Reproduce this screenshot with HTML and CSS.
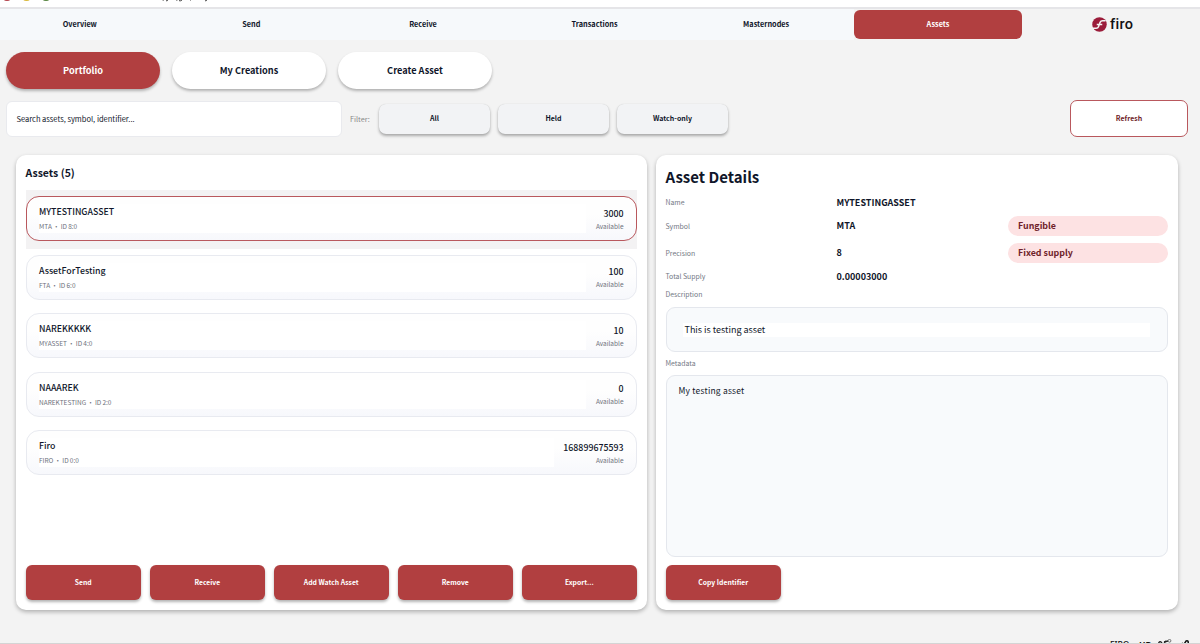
FILE: index.html
```html
<!DOCTYPE html>
<html lang="en">
<head>
<meta charset="utf-8">
<title>Firo</title>
<link rel="stylesheet" href="styles.css">
</head>
<body>
<div class="window">
  <header class="titlebar">
    <svg class="lights" width="220" height="3" viewBox="0 0 220 3">
      <ellipse cx="7" cy="-1.100" rx="3.500" ry="2" fill="#b3424b"/>
      <ellipse cx="26.500" cy="-1.100" rx="3.500" ry="2" fill="#d9b93a"/>
      <ellipse cx="46" cy="-1.100" rx="3.500" ry="2" fill="#56843f"/>
      <path d="M162.500 0h1.500M168 0q-.5 1-2 .8M176 0h1.500M182 0q-1 1.200-3 .7M190 0h1M207 0q-.6 1-2 .8" stroke="#444" fill="none"/>
    </svg>
  </header>
  <nav class="nav">
    <div class="tabs">
      <a class="tab">Overview</a>
      <a class="tab">Send</a>
      <a class="tab">Receive</a>
      <a class="tab">Transactions</a>
      <a class="tab">Masternodes</a>
    </div>
    <a class="tab tab-active">Assets</a>
    <div class="brand">
      <svg width="15" height="15" viewBox="0 0 30 30">
        <circle cx="15" cy="15" r="14.500" fill="#9b1c3a"/>
        <path d="M27 7.500h-6q-3.500 0-4.800 3.200l-3.200 8.600q-1.200 3.200-4.700 3.200H2M9.500 15h11" stroke="#f3f3f3" stroke-width="3" fill="none"/>
      </svg>
      <span>firo</span>
    </div>
  </nav>
  <div class="subtabs">
    <button class="pill pill-active">Portfolio</button>
    <button class="pill">My Creations</button>
    <button class="pill">Create Asset</button>
  </div>
  <div class="toolbar">
    <div class="search">Search assets, symbol, identifier...</div>
    <span class="filter-label">Filter:</span>
    <button class="chip">All</button>
    <button class="chip">Held</button>
    <button class="chip">Watch-only</button>
    <button class="refresh">Refresh</button>
  </div>
  <main class="panels">
    <section class="panel assets">
      <h2>Assets (5)</h2>
      <div class="list">
        <div class="row selected"><div class="card"><div class="info"><b>MYTESTINGASSET</b><small>MTA • ID 8:0</small></div><div class="amount"><b>3000</b><small>Available</small></div></div></div>
        <div class="row"><div class="card"><div class="info"><b>AssetForTesting</b><small>FTA • ID 6:0</small></div><div class="amount"><b>100</b><small>Available</small></div></div></div>
        <div class="row"><div class="card"><div class="info"><b>NAREKKKKK</b><small>MYASSET • ID 4:0</small></div><div class="amount"><b>10</b><small>Available</small></div></div></div>
        <div class="row"><div class="card"><div class="info"><b>NAAAREK</b><small>NAREKTESTING • ID 2:0</small></div><div class="amount"><b>0</b><small>Available</small></div></div></div>
        <div class="row"><div class="card"><div class="info"><b>Firo</b><small>FIRO • ID 0:0</small></div><div class="amount"><b>168899675593</b><small>Available</small></div></div></div>
      </div>
      <div class="actions">
        <button class="action">Send</button>
        <button class="action">Receive</button>
        <button class="action">Add Watch Asset</button>
        <button class="action">Remove</button>
        <button class="action">Export...</button>
      </div>
    </section>
    <section class="panel details">
      <h1>Asset Details</h1>
      <div class="facts">
        <span>Name</span><b>MYTESTINGASSET</b><i></i>
        <span>Symbol</span><b>MTA</b><em>Fungible</em>
        <span>Precision</span><b>8</b><em>Fixed supply</em>
        <span>Total Supply</span><b>0.00003000</b><i></i>
      </div>
      <div class="label">Description</div>
      <div class="description"><div>This is testing asset</div></div>
      <div class="label label-meta">Metadata</div>
      <div class="metadata">My testing asset</div>
      <button class="action">Copy Identifier</button>
    </section>
  </main>
  <footer class="status">
    <span class="unit">FIRO</span>
    <span class="hd">HD</span>
    <svg width="34" height="8" viewBox="0 0 34 8">
      <path d="M0 5q2-4 4-1M4 7l4-5M6 3l4-1M8 5h3" stroke="#222" stroke-width="1.300" fill="none"/>
      <circle cx="11.500" cy="1.800" r="1.400" stroke="#555" stroke-width=".8" fill="none"/>
      <circle cx="1.500" cy="5" r="1.400" stroke="#555" stroke-width=".8" fill="none"/>
      <path d="M22 6l3-2M25 7l3-5q3-1 2 3v3" stroke="#111" stroke-width="1.500" fill="none"/>
    </svg>
  </footer>
</div>
</body>
</html>
```
FILE: styles.css
```css
* { box-sizing: border-box; }
body {
  margin: 0;
  background: #f3f3f3;
  color: #10162a;
  font-family: "Noto Sans CJK SC", "Noto Sans", sans-serif;
}
button {
  font: inherit;
  color: inherit;
  border: 0;
  padding: 0 0 2px;
  font-weight: 700;
}
.window {
  width: 1200px;
  height: 644px;
  overflow: hidden;
  display: flex;
  flex-direction: column;
}
.titlebar {
  height: 9px;
  flex: none;
  background: #fff;
  border-bottom: 2px solid #e5e5e8;
}
.lights { display: block; }
.nav {
  height: 31px;
  flex: none;
  display: flex;
  align-items: flex-start;
}
.tabs {
  width: 854px;
  height: 31px;
  display: flex;
  background: #f6f9fb;
}
.tab {
  width: 171.6px;
  height: 30px;
  flex: none;
  padding: 0 12px 0 0;
  display: flex;
  align-items: center;
  justify-content: center;
  font-size: 7.3px;
  font-weight: 700;
}
.tab-active {
  width: 168px;
  height: 29px;
  margin-top: .5px;
  padding: 0 0 1px;
  border-radius: 6px;
  background: #b13f40;
  color: #fff;
}
.brand {
  margin: 7px 0 0 70px;
  display: flex;
  align-items: center;
  gap: 3px;
  height: 16px;
  font: 500 14.5px/16px Roboto, sans-serif;
  letter-spacing: .3px;
  color: #111;
}
.brand span { padding-top: 1px; }
.subtabs {
  display: flex;
  gap: 12px;
  padding: 12px 6px 0;
  height: 61px;
  flex: none;
}
.pill {
  width: 154px;
  height: 37px;
  border-radius: 19px;
  background: #fff;
  font-size: 9.2px;
  box-shadow: 0 2px 3px rgba(0,0,0,.27);
}
.pill-active {
  background: #b13f40;
  color: #fff;
}
.toolbar {
  height: 36px;
  flex: none;
  display: flex;
  align-items: center;
  padding: 0 12px 0 6px;
}
.search {
  width: 336px;
  height: 36px;
  border: 1px solid #e9eaee;
  border-radius: 6px;
  background: #fff;
  padding-left: 9.5px;
  line-height: 34px;
  font-size: 7.5px;
}
.filter-label {
  width: 37px;
  padding: 0 0 1px 8px;
  font-size: 7.3px;
  color: #888;
}
.chip {
  width: 111px;
  height: 30px;
  margin-right: 8px;
  border-radius: 7px;
  background: #f2f3f5;
  font-size: 7px;
  box-shadow: 0 2px 3px rgba(0,0,0,.3), 0 0 1px rgba(0,0,0,.15);
}
.refresh {
  width: 118px;
  height: 37px;
  margin: -1px 0 0 auto;
  border: 1px solid #b9585d;
  border-radius: 7px;
  background: #fff;
  color: #701f2b;
  font-size: 7px;
}
.panels {
  display: flex;
  gap: 9px;
  padding: 18px 0 0 15.5px;
  height: 473px;
  flex: none;
}
.panel {
  height: 455px;
  padding: 0 10px 10px;
  border-radius: 10px;
  background: #fff;
  box-shadow: 0 2px 4px rgba(0,0,0,.28);
  display: flex;
  flex-direction: column;
}
.assets { width: 631.5px; }
.details { width: 522px; padding-left: 9.5px; }
h1, h2 { margin: 0; font-weight: 700; flex: none; }
h2 {
  height: 35px;
  line-height: 36px;
  font-size: 10.5px;
}
.list { flex: 1; }
.row {
  height: 58.6px;
  padding: 6px 0 7.6px;
}
.selected { background: #f3f2f3; }
.card {
  height: 45px;
  display: flex;
  justify-content: space-between;
  padding: 0 12.5px;
  border: 1px solid #e8eaf0;
  border-radius: 13px;
  background: linear-gradient(#fefefe 40%, #f7f8fc);
}
.selected .card { border-color: #b9585d; }
.card b, .card small {
  display: block;
  white-space: nowrap;
}
.card b {
  font-size: 8.8px;
  font-weight: 500;
  line-height: 15px;
}
.card small {
  font-size: 6.5px;
  line-height: 14px;
  font-weight: 400;
  word-spacing: -.3px;
  color: #6d707b;
}
.info {
  flex: 1;
  height: 29px;
  margin-top: 7px;
  background: #fff;
}
.amount {
  min-width: 38px;
  margin-top: 8.5px;
  padding-left: 9px;
  text-align: right;
}
.card .amount small { line-height: 11px; }
.actions { display: flex; gap: 8.5px; }
.action {
  width: 115.5px;
  height: 35px;
  flex: none;
  border-radius: 6px;
  background: #b13f40;
  color: #fff;
  font-size: 6.8px;
  box-shadow: 0 2px 3px rgba(0,0,0,.3);
}
h1 {
  height: 37px;
  line-height: 43px;
  font-size: 15px;
}
.facts {
  display: grid;
  grid-template-columns: 171px 171px 160px;
  grid-template-rows: 20px 27px 27px 20px;
  align-items: center;
}
.facts span, .label { font-size: 6.9px; color: #737884; }
.facts b { font-size: 9px; }
.facts em {
  height: 20px;
  padding-left: 10.5px;
  border-radius: 10px;
  background: #fde2e3;
  color: #701f2b;
  font-style: normal;
  font-weight: 700;
  font-size: 8.9px;
  line-height: 20px;
}
.label { height: 21px; line-height: 16px; flex: none; }
.description {
  height: 45px;
  flex: none;
  border: 1px solid #e4e7ed;
  border-radius: 9px;
  background: #f8fafc;
  padding: 15px 17px 0 16px;
}
.description div {
  height: 14px;
  line-height: 13px;
  padding-left: 2px;
  background: #fff;
  font-size: 9px;
}
.label-meta { height: 23px; line-height: 23px; }
.metadata {
  height: 182px;
  flex: none;
  margin-bottom: 8px;
  border: 1px solid #e4e7ed;
  border-radius: 9px;
  background: #f8fafc;
  padding: 7px 12px;
  font-size: 8.5px;
  line-height: 14px;
  letter-spacing: .2px;
}
.status {
  height: 16px;
  flex: none;
  margin-top: 18px;
  padding: 11px 0 0 1110px;
  display: flex;
  align-items: flex-start;
  overflow: hidden;
  border-bottom: 1px solid #d4d4d4;
  color: #111;
  font: 500 8.5px/12px "Noto Sans", sans-serif;
}
.unit { width: 29px; }
.hd { width: 19px; font-weight: 700; }
```
